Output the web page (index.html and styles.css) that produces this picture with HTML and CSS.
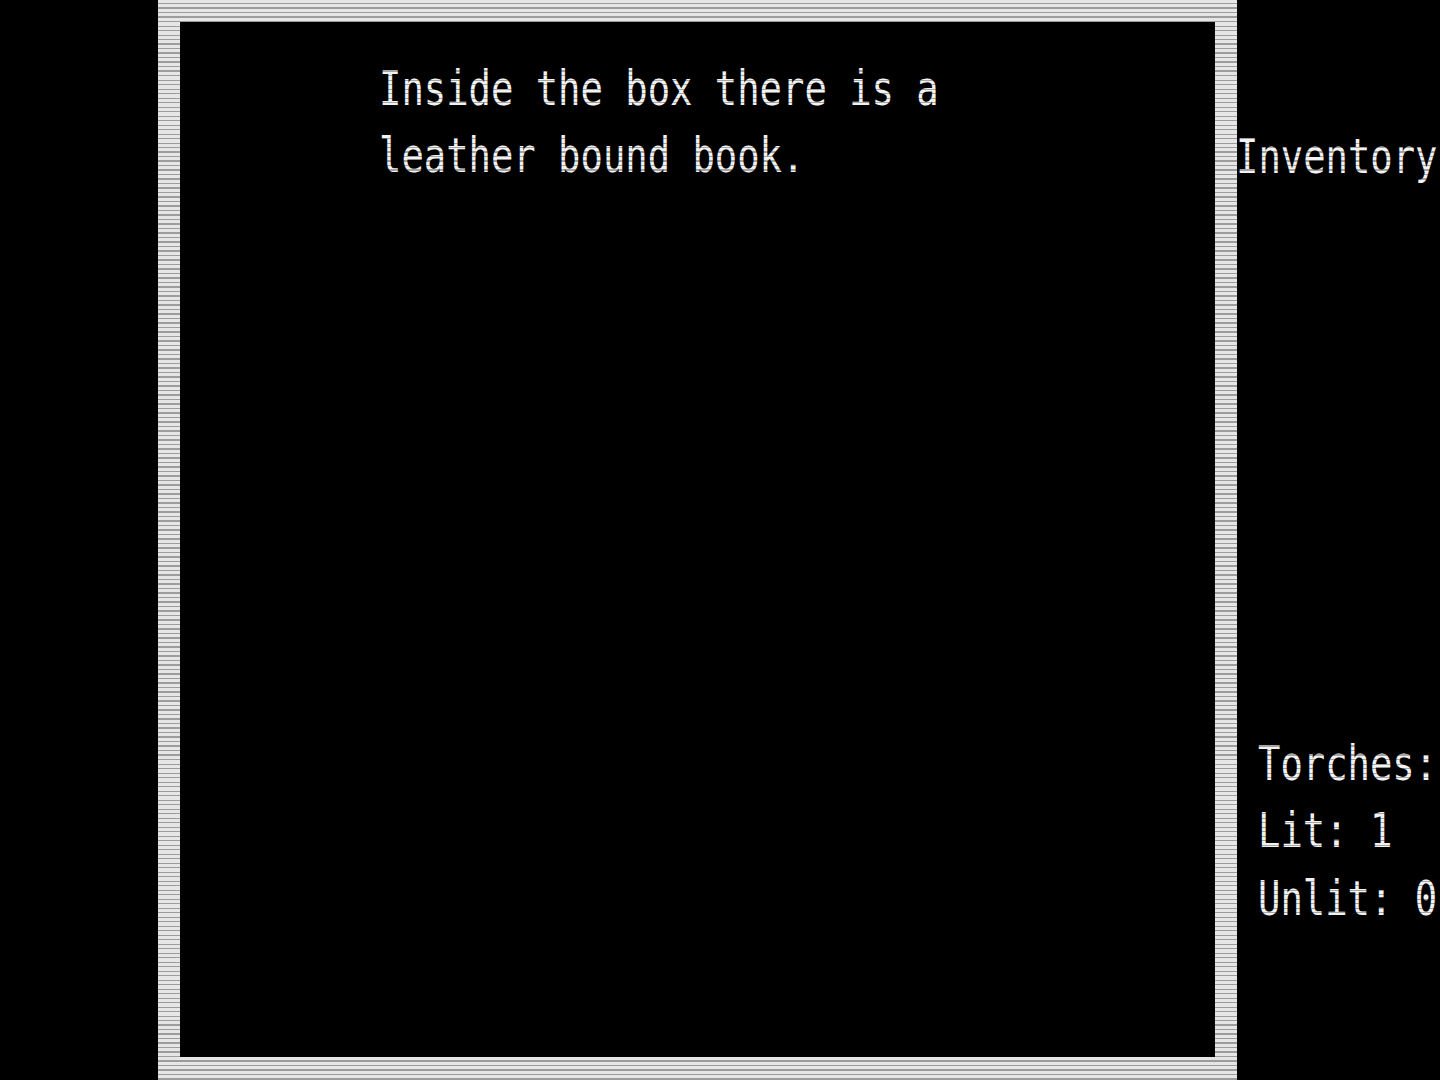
FILE: index.html
```html
<!DOCTYPE html>
<html lang="en">
<head>
<meta charset="utf-8">
<title>Adventure</title>
<link rel="stylesheet" href="styles.css">
</head>
<body>
<div class="screen">
  <div class="gutter"></div>
  <div class="frame">
    <div class="view">
      <div class="message">
        <div class="line">Inside the box there is a</div>
        <div class="line">leather bound book.</div>
      </div>
    </div>
  </div>
  <div class="panel">
    <div class="inventory">
      <div class="line">Inventory</div>
    </div>
    <div class="torches">
      <div class="line">Torches:</div>
      <div class="line">Lit: 1</div>
      <div class="line">Unlit: 0</div>
    </div>
  </div>
</div>
<div class="scanlines"></div>
</body>
</html>
```

FILE: styles.css
```css
html, body {
  margin: 0;
  padding: 0;
  background: #000;
  width: 1440px;
  height: 1080px;
  overflow: hidden;
}

.screen {
  display: flex;
  flex-direction: row;
  width: 1440px;
  height: 1080px;
}

.gutter {
  width: 158px;
  flex: none;
}

.frame {
  width: 1079px;
  height: 1080px;
  flex: none;
  box-sizing: border-box;
  background: #e6e6e6;
  padding: 22px 22px 23px 22px;
}

.view {
  background: #000;
  height: 100%;
  box-sizing: border-box;
  padding: 32px 0 0 199px;
}

.message,
.inventory,
.torches {
  font-family: "DejaVu Sans Mono", "Liberation Mono", monospace;
  font-size: 37.2px;
  line-height: 52px;
  color: #f2f2f2;
  white-space: nowrap;
  transform: scaleY(1.3);
  transform-origin: 0 0;
}

.panel {
  width: 203px;
  flex: none;
  display: flex;
  flex-direction: column;
  overflow: hidden;
}

.inventory {
  margin-top: 122px;
  margin-left: -1px;
}

.torches {
  margin-top: 555px;
  margin-left: 21px;
}

.scanlines {
  position: fixed;
  inset: 0;
  pointer-events: none;
  background: repeating-linear-gradient(
    to bottom,
    rgba(0, 0, 0, 0) 0px,
    rgba(0, 0, 0, 0) 3px,
    rgba(0, 0, 0, 0.32) 3px,
    rgba(0, 0, 0, 0.32) 4.5px
  );
}
```
